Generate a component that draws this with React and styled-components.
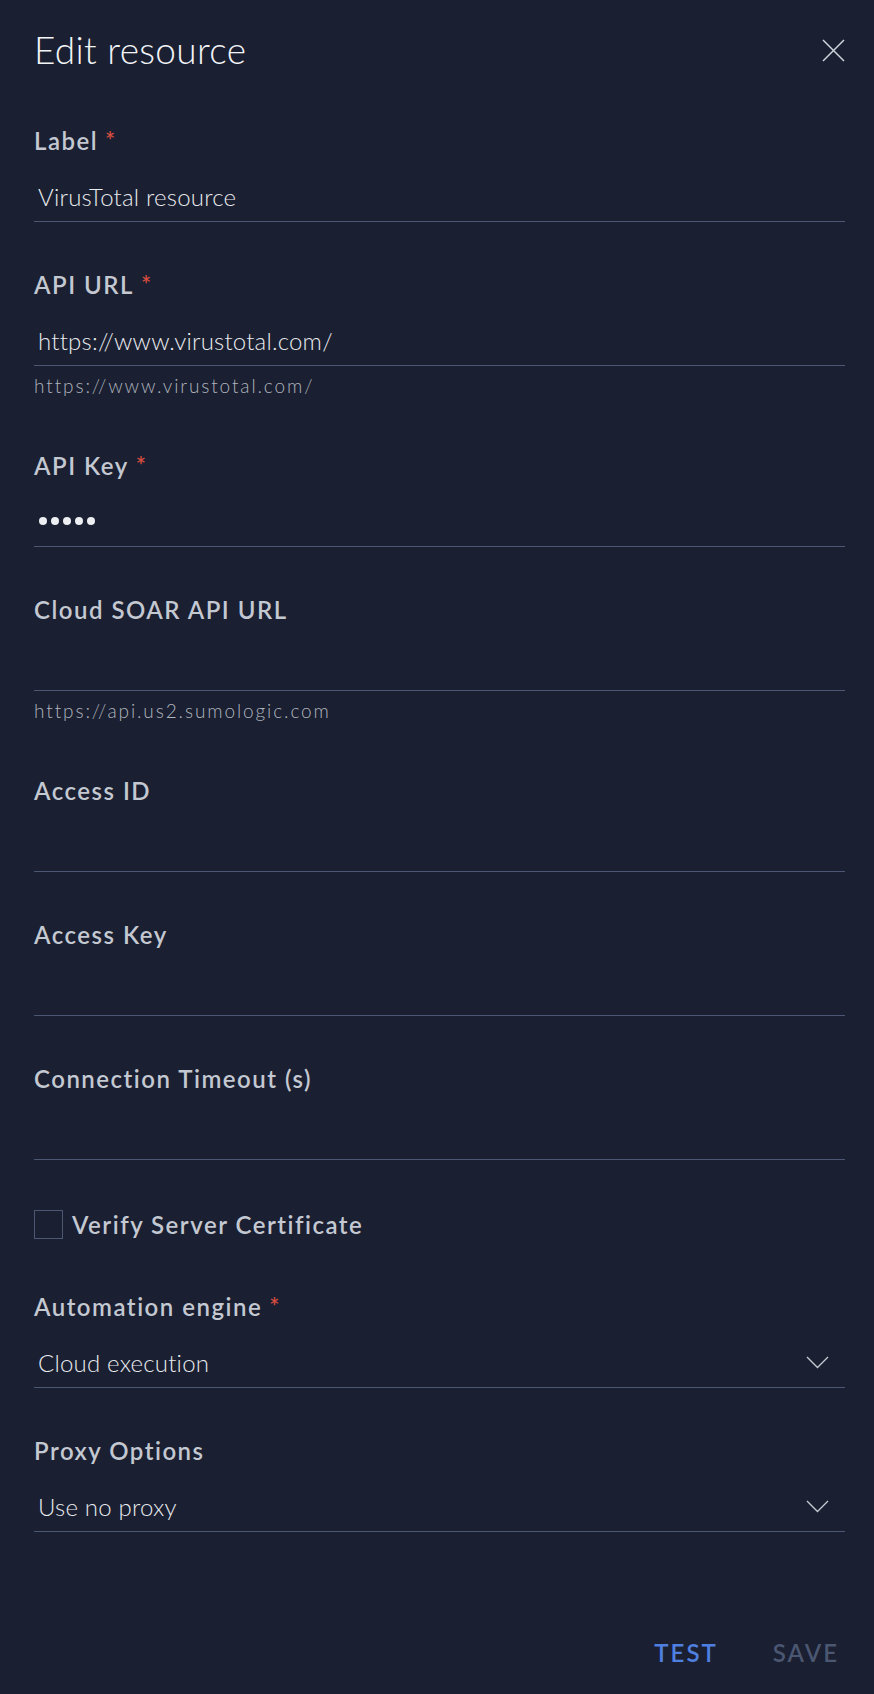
import React from "react";
import styled, { createGlobalStyle } from "styled-components";

const GlobalStyle = createGlobalStyle`
  html, body {
    margin: 0;
    padding: 0;
    background: #1a1f31;
  }
  body {
    font-family: "Lato", "Liberation Sans", sans-serif;
  }
`;

const fields = [
  { label: "Label", required: true, value: "VirusTotal resource" },
  {
    label: "API URL",
    required: true,
    value: "https://www.virustotal.com/",
    helper: "https://www.virustotal.com/",
  },
  { label: "API Key", required: true, secret: 5 },
  {
    label: "Cloud SOAR API URL",
    value: "",
    helper: "https://api.us2.sumologic.com",
  },
  { label: "Access ID", value: "" },
  { label: "Access Key", value: "" },
  { label: "Connection Timeout (s)", value: "" },
];

const selects = [
  { label: "Automation engine", required: true, value: "Cloud execution" },
  { label: "Proxy Options", value: "Use no proxy" },
];

function Chevron() {
  return (
    <svg width="23" height="13" viewBox="0 0 23 13" fill="none">
      <path d="M1 1L11.5 11.5L22 1" stroke="#c3c8d1" strokeWidth="1.4" />
    </svg>
  );
}

function CloseIcon() {
  return (
    <svg width="23" height="23" viewBox="0 0 23 23" fill="none">
      <path d="M1 1L22 22M22 1L1 22" stroke="#d0d4db" strokeWidth="1.5" />
    </svg>
  );
}

function FieldLabel({ text, required }) {
  return (
    <Label>
      {text}
      {required && <Star>*</Star>}
    </Label>
  );
}

function App() {
  return (
    <>
      <GlobalStyle />
      <Panel>
        <Header>
          <Title>Edit resource</Title>
          <CloseButton>
            <CloseIcon />
          </CloseButton>
        </Header>

        <Form>
          {fields.map((f) => (
            <Field key={f.label}>
              <FieldLabel text={f.label} required={f.required} />
              <Input>
                {f.secret ? (
                  <Dots>
                    {Array.from({ length: f.secret }).map((_, i) => (
                      <Dot key={i} />
                    ))}
                  </Dots>
                ) : (
                  f.value
                )}
              </Input>
              {f.helper && <Helper>{f.helper}</Helper>}
            </Field>
          ))}

          <CheckRow>
            <Box />
            <CheckText>Verify Server Certificate</CheckText>
          </CheckRow>

          {selects.map((s) => (
            <Field key={s.label}>
              <FieldLabel text={s.label} required={s.required} />
              <Input>
                <span>{s.value}</span>
                <Chevron />
              </Input>
            </Field>
          ))}
        </Form>

        <Footer>
          <Button $primary>TEST</Button>
          <Button>SAVE</Button>
        </Footer>
      </Panel>
    </>
  );
}

export default App;

const Panel = styled.div`
  width: 100%;
  min-height: 1694px;
  box-sizing: border-box;
  padding: 0 29px 0 34px;
  display: flex;
  flex-direction: column;
`;

const Header = styled.header`
  height: 100px;
  display: flex;
  align-items: center;
  justify-content: space-between;
`;

const Title = styled.h1`
  margin: 0;
  color: #f2f4f7;
  font-size: 37px;
  font-weight: 300;
  letter-spacing: 0.3px;
  line-height: 40px;
`;

const CloseButton = styled.button`
  background: none;
  border: 0;
  padding: 0;
  display: flex;
  cursor: pointer;
`;

const Form = styled.div`
  padding-top: 27px;
  display: flex;
  flex-direction: column;
  gap: 49px;
`;

const Field = styled.div`
  display: flex;
  flex-direction: column;
`;

const Label = styled.label`
  color: #c3c8d1;
  font-size: 24px;
  font-weight: 600;
  letter-spacing: 1.5px;
  line-height: 28px;
  margin-bottom: 16px;
`;

const Star = styled.span`
  color: #d64c3f;
  margin-left: 7px;
`;

const Input = styled.div`
  height: 50px;
  border-bottom: 1px solid #4c5873;
  padding: 0 16px 0 4px;
  display: flex;
  align-items: center;
  justify-content: space-between;
  color: #e8eaee;
  font-size: 24px;
  font-weight: 300;
  letter-spacing: 0.2px;
`;

const Dots = styled.div`
  display: flex;
  gap: 4px;
  padding-left: 1px;
`;

const Dot = styled.span`
  width: 8px;
  height: 8px;
  border-radius: 50%;
  background: #eceef2;
`;

const Helper = styled.div`
  margin: 8px 0 5px;
  line-height: 24px;
  font-size: 19px;
  font-weight: 300;
  letter-spacing: 1.9px;
  color: #b0b5be;
`;

const CheckRow = styled.div`
  display: flex;
  align-items: center;
  gap: 9px;
  height: 30px;
  padding-bottom: 5px;
`;

const Box = styled.span`
  width: 27px;
  height: 27px;
  border: 1px solid #4c5873;
`;

const CheckText = styled.span`
  color: #c3c8d1;
  font-size: 24px;
  font-weight: 600;
  letter-spacing: 1.5px;
`;

const Footer = styled.div`
  margin-top: 100px;
  display: flex;
  justify-content: flex-end;
  gap: 41px;
`;

const Button = styled.button`
  background: none;
  border: 0;
  height: 40px;
  padding: 0 6px 0 8px;
  font-family: inherit;
  font-size: 24px;
  font-weight: 600;
  letter-spacing: 2px;
  color: ${(p) => (p.$primary ? "#4f80e1" : "#4b5671")};
  cursor: pointer;
`;
